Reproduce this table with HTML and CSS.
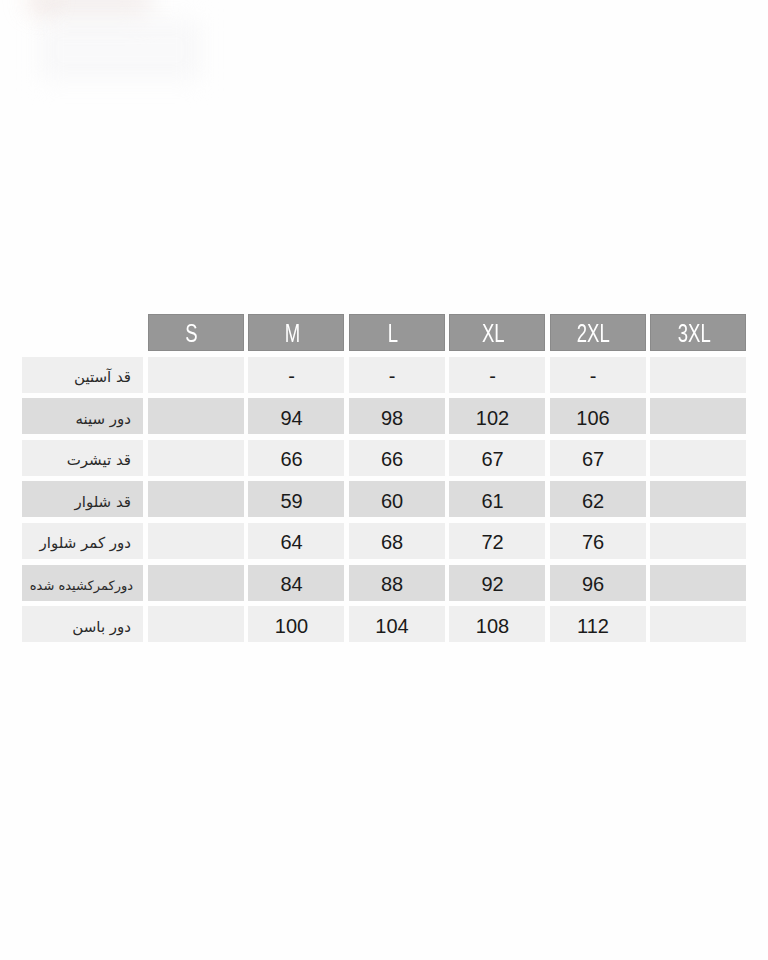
FILE: index.html
```html
<!DOCTYPE html>
<html lang="fa">
<head>
<meta charset="utf-8">
<title>جدول سایز</title>
<link rel="stylesheet" href="styles.css">
</head>
<body>
<div class="page">
  <div class="hero">
    <div class="blur blur-a"></div>
    <div class="blur blur-b"></div>
    <div class="blur blur-c"></div>
  </div>
  <div class="chart">
    <div class="corner"></div>
    <div class="head"><span>S</span></div>
    <div class="head"><span>M</span></div>
    <div class="head"><span>L</span></div>
    <div class="head"><span>XL</span></div>
    <div class="head"><span>2XL</span></div>
    <div class="head"><span>3XL</span></div>

    <div class="label light">قد آستین</div>
    <div class="cell light"></div>
    <div class="cell light">-</div>
    <div class="cell light">-</div>
    <div class="cell light">-</div>
    <div class="cell light">-</div>
    <div class="cell light"></div>

    <div class="label dark">دور سینه</div>
    <div class="cell dark"></div>
    <div class="cell dark">94</div>
    <div class="cell dark">98</div>
    <div class="cell dark">102</div>
    <div class="cell dark">106</div>
    <div class="cell dark"></div>

    <div class="label light">قد تیشرت</div>
    <div class="cell light"></div>
    <div class="cell light">66</div>
    <div class="cell light">66</div>
    <div class="cell light">67</div>
    <div class="cell light">67</div>
    <div class="cell light"></div>

    <div class="label dark">قد شلوار</div>
    <div class="cell dark"></div>
    <div class="cell dark">59</div>
    <div class="cell dark">60</div>
    <div class="cell dark">61</div>
    <div class="cell dark">62</div>
    <div class="cell dark"></div>

    <div class="label light">دور کمر شلوار</div>
    <div class="cell light"></div>
    <div class="cell light">64</div>
    <div class="cell light">68</div>
    <div class="cell light">72</div>
    <div class="cell light">76</div>
    <div class="cell light"></div>

    <div class="label dark small">دورکمرکشیده شده</div>
    <div class="cell dark"></div>
    <div class="cell dark">84</div>
    <div class="cell dark">88</div>
    <div class="cell dark">92</div>
    <div class="cell dark">96</div>
    <div class="cell dark"></div>

    <div class="label light">دور باسن</div>
    <div class="cell light"></div>
    <div class="cell light">100</div>
    <div class="cell light">104</div>
    <div class="cell light">108</div>
    <div class="cell light">112</div>
    <div class="cell light"></div>
  </div>
</div>
</body>
</html>
```

FILE: styles.css
```css
html, body {
  margin: 0;
  padding: 0;
  background: #fefefe;
}

.page {
  width: 768px;
  height: 960px;
  position: relative;
  overflow: hidden;
}

.hero {
  height: 314px;
  position: relative;
}

.blur {
  position: absolute;
  filter: blur(12px);
}

.blur-a {
  left: 34px;
  top: -14px;
  width: 120px;
  height: 32px;
  background: rgba(232, 222, 220, 0.45);
  border-radius: 20px;
}

.blur-b {
  left: 40px;
  top: 20px;
  width: 160px;
  height: 60px;
  background: rgba(244, 244, 246, 0.55);
}

.blur-c {
  left: 26px;
  top: -8px;
  width: 26px;
  height: 18px;
  background: rgba(236, 205, 195, 0.35);
  border-radius: 50%;
}

.chart {
  display: grid;
  grid-template-columns: 121px repeat(6, 96px);
  grid-template-rows: 37px repeat(7, 36px);
  column-gap: 4.5px;
  row-gap: 5.6px;
  margin-left: 22px;
}

.head {
  background: #979797;
  border: 1px solid #8a8a8a;
  box-sizing: border-box;
  color: #ffffff;
  font-family: "Liberation Sans", Arial, sans-serif;
  font-size: 25px;
  display: flex;
  align-items: center;
  justify-content: center;
  padding: 2px 8px 0 0;
}

.head span {
  display: inline-block;
  transform: scaleX(0.74);
}

.label {
  direction: rtl;
  text-align: right;
  font-family: "DejaVu Sans", "Noto Sans", sans-serif;
  font-size: 15px;
  color: #2a2a2a;
  display: flex;
  align-items: center;
  padding: 5px 12px 0 0;
}

.label.small {
  font-size: 13px;
  letter-spacing: -0.5px;
  padding-right: 10px;
}

.cell {
  font-family: "Liberation Sans", Arial, sans-serif;
  font-size: 20px;
  color: #1a1a1a;
  display: flex;
  align-items: center;
  justify-content: center;
  padding: 4px 9px 0 0;
  box-sizing: border-box;
}

.light {
  background: #efefef;
}

.dark {
  background: #dcdcdc;
}
```
